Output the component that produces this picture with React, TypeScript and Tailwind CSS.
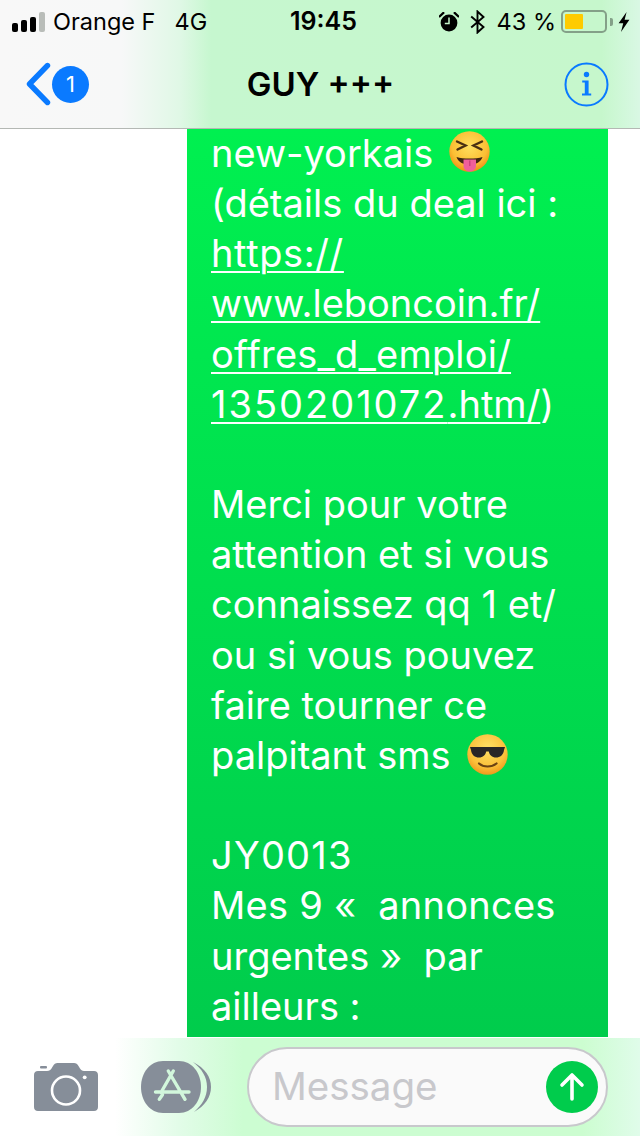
import React from 'react';

function SignalBars() {
  return (
    <div className="flex items-end gap-[3px]">
      <div className="w-[6px] h-[9px] rounded-[2px] bg-black" />
      <div className="w-[6px] h-[12px] rounded-[2px] bg-black" />
      <div className="w-[6px] h-[15px] rounded-[2px] bg-black" />
      <div className="w-[6px] h-[20px] rounded-[2px] bg-[#b9bdb9]" />
    </div>
  );
}

function AlarmIcon() {
  return (
    <svg width="20" height="20" viewBox="0 0 20 20">
      <circle cx="10" cy="11" r="8.4" fill="#000" />
      <path d="M10 5.5V11.5H5.8" fill="none" stroke="#c6f6cc" strokeWidth="1.5" />
      <path d="M0.6 4.4L4.4 0.9M19.4 4.4L15.6 0.9" stroke="#000" strokeWidth="2.2" strokeLinecap="round" />
    </svg>
  );
}

function BluetoothIcon() {
  return (
    <svg width="15" height="24" viewBox="0 0 15 24" className="block">
      <path d="M1.2 6.500L13.500 17L7.500 22.500V1.500L13.500 7L1.200 17.500" fill="none" stroke="#000" strokeWidth="1.9" />
    </svg>
  );
}

function Battery() {
  return (
    <div className="flex items-center">
      <div className="w-[46px] h-[23px] rounded-[5px] border-2 border-[#84a088] p-[2px] flex">
        <div className="w-[18px] bg-[#fecb00] rounded-[1px]" />
      </div>
      <div className="w-[3px] h-[8px] ml-[3px] rounded-r-[2px] bg-[#84a088]" />
    </div>
  );
}

function BoltIcon() {
  return (
    <svg width="12" height="20" viewBox="0 0 12 20" className="block">
      <path d="M8.6 0L0.6 11.2H5.2L3 20L11.4 7.8H6.6Z" fill="#000" />
    </svg>
  );
}

function InfoIcon() {
  return (
    <svg width="45" height="45" viewBox="0 0 45 45">
      <circle cx="22.5" cy="22.5" r="21" fill="none" stroke="#0a7aff" strokeWidth="2" />
      <circle cx="22.5" cy="12.5" r="2.7" fill="#0a7aff" />
      <path d="M18.2 18.6H24.6V31.6H27.2V33.4H18V31.6H20.8V20.4H18.2Z" fill="#0a7aff" />
    </svg>
  );
}

function LaughEmoji() {
  return (
    <svg width="41" height="41" viewBox="0 0 41 41" className="inline-block align-[-5px] ml-[5px]">
      <defs>
        <radialGradient id="faceA" cx="50%" cy="38%" r="62%">
          <stop offset="0%" stopColor="#ffdf5e" />
          <stop offset="70%" stopColor="#fbbf34" />
          <stop offset="100%" stopColor="#ee8f16" />
        </radialGradient>
      </defs>
      <circle cx="20.5" cy="20.5" r="20.2" fill="url(#faceA)" />
      <path d="M8 10.5L16.5 14.5L8.5 18.5M33 10.5L24.5 14.5L32.5 18.5" fill="none" stroke="#4a3012" strokeWidth="2.4" strokeLinecap="round" />
      <path d="M7.5 26C14 28 27 28 33.5 26C32 31 27 33.5 20.5 33.5C14 33.5 9 31 7.5 26Z" fill="#3f2510" />
      <path d="M14.5 28.5H27V35C27 38.5 24 40.5 20.8 40.5C17.5 40.5 14.5 38.5 14.5 35Z" fill="#ef5f9b" />
      <path d="M20.8 29.5V35" stroke="#c93a78" strokeWidth="1.2" />
    </svg>
  );
}

function SunglassesEmoji() {
  return (
    <svg width="41" height="41" viewBox="0 0 41 41" className="inline-block align-[-6px] ml-[6px]">
      <defs>
        <radialGradient id="faceB" cx="50%" cy="35%" r="65%">
          <stop offset="0%" stopColor="#ffe066" />
          <stop offset="70%" stopColor="#fbc03a" />
          <stop offset="100%" stopColor="#ef9a1c" />
        </radialGradient>
      </defs>
      <circle cx="20.5" cy="20.5" r="20.2" fill="url(#faceB)" />
      <path d="M3 13H38L37 16C36.5 21 33 23.5 29 23.5C25 23.5 22.5 21 21.8 17.5H19.2C18.5 21 16 23.5 12 23.5C8 23.5 4.5 21 4 16Z" fill="#2a2626" />
      <path d="M12 29.5C16.5 33.5 24.5 33.5 29.5 29.5" fill="none" stroke="#6b4213" strokeWidth="2.2" strokeLinecap="round" />
    </svg>
  );
}

function CameraIcon() {
  return (
    <svg width="64" height="48" viewBox="0 0 64 48" className="shrink-0">
      <path
        d="M4 8H13C15.500 8 16.500 7 17.500 5.500L19 3C20 1 21.500 0 23.500 0H40C42 0 43.500 1 44.500 3L46 5.500C47 7 48 8 50 8H60C62.500 8 64 9.500 64 12V44C64 46.500 62.500 48 60 48H4C1.500 48 0 46.500 0 44V12C0 9.500 1.500 8 4 8Z"
        fill="#868e99"
      />
      <rect x="6" y="3" width="7" height="2.5" rx="1" fill="#868e99" />
      <circle cx="32" cy="27.5" r="14" fill="none" stroke="#fff" strokeWidth="2.6" />
      <circle cx="50.700" cy="14.300" r="1.900" fill="#fff" />
    </svg>
  );
}

function AppsIcon() {
  return (
    <svg width="71" height="52" viewBox="0 0 71 52" className="shrink-0">
      <path d="M52 1C64 7 70 16 70 26C70 36 64 45 53 51C61 44 66 36 66 26C66 16 61 8 52 1Z" fill="#868e99" />
      <path d="M22 0H38C51 0 60 12 60 26C60 40 51 52 38 52H22C9 52 0 40 0 26C0 12 9 0 22 0Z" fill="#868e99" />
      <path d="M32.300 10L20 31.500M27.300 10L44 38.300M14.500 31H48M21.500 33.800L18.300 38.300" fill="none" stroke="#d2f7dc" strokeWidth="3.400" strokeLinecap="round" />
    </svg>
  );
}

function SendIcon() {
  return (
    <svg width="52" height="52" viewBox="0 0 52 52" className="shrink-0">
      <circle cx="26" cy="26" r="26" fill="#00cc4c" />
      <path d="M26 38V14M16 24L26 14L36 24" fill="none" stroke="#fff" strokeWidth="3.600" strokeLinecap="round" strokeLinejoin="round" />
    </svg>
  );
}

export default function App() {
  return (
    <div className="w-[640px] h-[1136px] flex flex-col overflow-hidden bg-white font-['Inter','Liberation_Sans',sans-serif]">
      <header className="h-[129px] shrink-0 flex flex-col border-b border-[#b4b8b4] bg-[linear-gradient(90deg,#f8f8f8_0%,#f7f8f8_19%,#e0f8e6_28%,#c6f7cf_33%,#c6f7cc_94%,#d9f8e4_100%)]">
        <div className="h-[43px] grid grid-cols-[1fr_auto_1fr] items-center pl-[12px] pr-[10px] text-[23.5px] text-black">
          <div className="flex items-center">
            <SignalBars />
            <span className="ml-[8px]">Orange F</span>
            <span className="ml-[19px]">4G</span>
          </div>
          <span className="font-semibold text-[25px] pl-[9px] pr-[4px]">19:45</span>
          <div className="flex items-center justify-end">
            <AlarmIcon />
            <span className="ml-[11px]"><BluetoothIcon /></span>
            <span className="ml-[12px] mr-[5px]">43 %</span>
            <Battery />
            <span className="ml-[5px]"><BoltIcon /></span>
          </div>
        </div>
        <nav className="flex-1 grid grid-cols-[1fr_auto_1fr] items-center pl-[26px] pr-[31px] pb-[3px]">
          <div className="flex items-center gap-[1px]">
            <svg width="25" height="44" viewBox="0 0 25 44">
              <path d="M21.500 3.500L3.500 22L21.500 40.500" fill="none" stroke="#0a7aff" strokeWidth="5.400" strokeLinecap="round" strokeLinejoin="round" />
            </svg>
            <div className="w-[37px] h-[37px] rounded-full bg-[#0a7aff] text-white text-[22px] flex items-center justify-center">1</div>
          </div>
          <h1 className="text-[33px] font-semibold text-black leading-none pl-[6px]">GUY +++</h1>
          <div className="flex justify-end">
            <InfoIcon />
          </div>
        </nav>
      </header>

      <main className="flex-1 min-h-0 overflow-hidden pl-[187px]">
        <div className="w-[421px] h-full pl-[24px] text-[38px] leading-[50.15px] text-white bg-[linear-gradient(180deg,#00f050_0%,#00cc4c_100%)] whitespace-nowrap">
          <div className="-mt-[1px]">
            new-yorkais <LaughEmoji />
            <br />
            (détails du deal ici :
            <br />
            <span className="underline decoration-2 underline-offset-4">
              <span className="tracking-[0.6px]">https://</span>
              <br />
              www.leboncoin.fr/
              <br />
              <span className="tracking-[0.2px]">offres_d_emploi/</span>
              <br />
              <span className="tracking-[2px]">1350201072</span>.htm/
            </span>
            )
            <br />
            <br />
            Merci pour votre
            <br />
            attention et si vous
            <br />
            connaissez qq 1 et/
            <br />
            ou si vous pouvez
            <br />
            faire tourner ce
            <br />
            palpitant sms <SunglassesEmoji />
            <br />
            <br />
            <span className="tracking-[1.2px]">JY0013</span>
            <br />
            <span className="tracking-[0.25px]">Mes 9 «&nbsp; annonces</span>
            <br />
            urgentes »&nbsp; par
            <br />
            ailleurs :
          </div>
        </div>
      </main>

      <footer className="h-[98px] shrink-0 flex items-center pl-[34px] pr-[32px] bg-[linear-gradient(90deg,#ffffff_0%,#ffffff_18%,#e2fce8_28%,#ccfdd2_38%,#ccfdd0_91%,#e0fcea_100%)]">
        <CameraIcon />
        <div className="ml-[43px]">
          <AppsIcon />
        </div>
        <div className="ml-[35px] flex-1 h-[80px] rounded-[40px] border-2 border-[#c8c8cc] bg-[#fafafa] flex items-center justify-between pl-[23px] pr-[8px]">
          <span className="text-[38.5px] text-[#c8c8cc]">Message</span>
          <SendIcon />
        </div>
      </footer>
    </div>
  );
}
